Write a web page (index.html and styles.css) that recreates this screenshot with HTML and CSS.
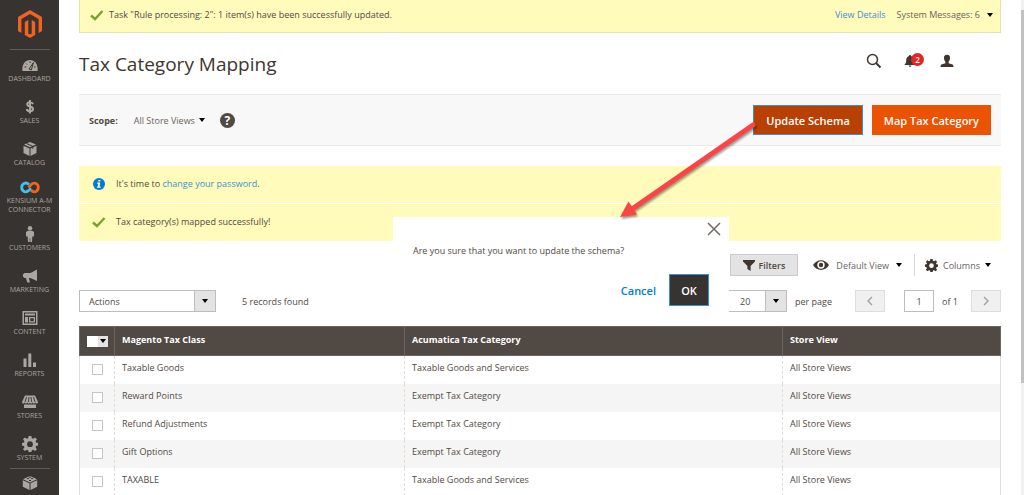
FILE: index.html
```html
<!DOCTYPE html>
<html lang="en">
<head>
<meta charset="utf-8">
<title>Tax Category Mapping</title>
<link rel="stylesheet" href="styles.css">
</head>
<body>
<svg class="sprite" aria-hidden="true">
  <symbol id="caret" viewBox="0 0 6 4"><path d="M0 0h6L3 4z"/></symbol>
  <symbol id="check" viewBox="0 0 14 12"><path d="M1 6.500l4 3.500 7.500-8" fill="none" stroke="#79a22e" stroke-width="2.400"/></symbol>
  <symbol id="gear" viewBox="0 0 16 16"><path fill-rule="evenodd" d="M6.600 0h2.800l.4 2.200 1.300.5L13 1.400 15 3.300l-1.400 1.900.5 1.300 2 .4v2.700l-2 .4-.5 1.300 1.300 1.900-1.900 1.900-1.900-1.300-1.300.5-.4 2.200H6.600l-.4-2.200-1.300-.5L3 15.100l-2-1.900 1.400-1.900-.5-1.300L0 9.600V6.900l1.900-.4.5-1.300L1 3.300 3 1.400l1.900 1.300 1.300-.5zM8 5.300a2.900 2.900 0 1 0 0 5.800 2.900 2.900 0 0 0 0-5.800z"/></symbol>
</svg>
<div class="page">
  <nav class="sidebar" aria-label="Main menu">
    <a class="logo" href="#" aria-label="Magento Admin">
      <svg width="24" height="28" viewBox="0 0 24 28" fill="#f26322"><path d="M12 0l12 7v14l-3.400 2V9L12 4 3.400 9v14L0 21V7zM10.300 10v13.500l1.700 1 1.700-1V10l3.500 2v13L12 28l-5.200-3V12z"/></svg>
    </a>
    <a class="item" href="#"><svg class="icon" width="16" height="16" viewBox="0 0 16 16"><path d="M.5 14C-.5 8 3 3 8 3s8.500 5 7.500 11z"/><path d="M7 12l4.500-6.500L9.300 13zM2.500 10h1.700M4 6.500l1 1M8 4.500V6M12 10h1.500" fill="none" stroke="#373330" stroke-width="1"/></svg><span>DASHBOARD</span></a>
    <a class="item" href="#"><svg class="icon" width="16" height="16" viewBox="0 0 16 16"><path d="M11 5.200C10.500 3.800 9.500 3.300 8 3.300c-1.700 0-2.800.8-2.800 2C5.200 8.500 11 6.500 11 10c0 1.500-1.300 2.300-3 2.300S5 11.500 4.700 10M8 1v13.500" fill="none" stroke="#aaa6a0" stroke-width="2"/></svg><span>SALES</span></a>
    <a class="item" href="#"><svg class="icon" width="16" height="16" viewBox="0 0 16 16"><path d="M8 1l6 2.600-6 2.700-6-2.700zM1.500 4.700l6 2.700V15l-6-3zM14.500 4.700l-6 2.700V15l6-3z"/><path d="M4.500 2.500l6.300 2.800v2.500" fill="none" stroke="#373330"/></svg><span>CATALOG</span></a>
    <a class="item item-tall" href="#"><svg class="icon" width="20" height="16" viewBox="0 0 20 16" fill="none" stroke-width="2.800"><path d="M9 4.500C5.500 1.300 1.700 4 1.700 7.500s4 6 7.300 2.800l2-2" stroke="#3fc3ee"/><path d="M8.500 7.500L11 4.700c3.500-3.200 7.300-.7 7.300 2.800s-4 6-7.300 2.800" stroke="#f26322"/></svg><span>KENSIUM A-M CONNECTOR</span></a>
    <a class="item" href="#"><svg class="icon" width="16" height="16" viewBox="0 0 16 16"><circle cx="8" cy="2.200" r="2.200"/><path d="M5.800 4.800h4.400L12 6v4.500h-1.500V8L10 16H8.300v-4h-.6v4H6L5.500 8v2.500H4V6z"/></svg><span>CUSTOMERS</span></a>
    <a class="item" href="#"><svg class="icon" width="16" height="16" viewBox="0 0 16 16"><path d="M15 1.500v11.500L8.500 10H7l.8 4.500H5.300L4 10H2.500L1 8.800V6.200L2.500 5h6z"/></svg><span>MARKETING</span></a>
    <a class="item" href="#"><svg class="icon" width="16" height="16" viewBox="0 0 16 16"><path fill-rule="evenodd" d="M.5 1h15v14H.5zM2 2.500v11h12v-11zM3 3.500h10v2H3zM3 7h3v5.500H3zM7 7h6v5.500H7zM8.300 8.200v3h3.400v-3z"/></svg><span>CONTENT</span></a>
    <a class="item" href="#"><svg class="icon" width="16" height="16" viewBox="0 0 16 16"><path d="M1.500 6.500h3V15h-3zM6.300 1.500h3V15h-3zM11 10.500h3V15h-3z"/></svg><span>REPORTS</span></a>
    <a class="item" href="#"><svg class="icon" width="16" height="16" viewBox="0 0 16 16"><path d="M3 1.500h10L16 8c0 2-2.500 2-2.700.3C13 10 10.800 10 10.600 8.300 10.500 10 8 10 8 8.300 8 10 5.500 10 5.400 8.300 5.200 10 3 10 2.700 8.300 2.500 10 0 10 0 8zM2 10.500h12V14H2z"/><path d="M4.500 3L3 8M7 3l-.6 5M9 3l.6 5M11.500 3L13 8" fill="none" stroke="#373330" stroke-width=".9"/></svg><span>STORES</span></a>
    <a class="item item-last" href="#"><svg class="icon" width="16" height="16"><use href="#gear"/></svg><span>SYSTEM</span></a>
    <a class="partners" href="#" aria-label="Find Partners and Extensions"><svg width="16" height="16" viewBox="0 0 16 16"><path d="M8 1l7 3.200-7 3.300-7-3.300zM.8 5.300l6.700 3V15l-6.700-3.300zM15.200 5.300l-6.700 3V15l6.700-3.300z" fill="#aaa6a0"/><path d="M5 3.600h2M9 3.600h2M7 5.500h2M7 2.200h2" stroke="#373330" fill="none"/></svg></a>
  </nav>

  <main class="main">
    <section class="system-message">
      <svg width="14" height="12"><use href="#check"/></svg>
      <p>Task "Rule processing: 2": 1 item(s) have been successfully updated.</p>
      <a class="details" href="#">View Details</a>
      <button class="plain" type="button">System Messages: 6 <svg class="caret" width="6" height="4"><use href="#caret"/></svg></button>
    </section>

    <header class="header">
      <h1>Tax Category Mapping</h1>
      <div class="tools">
        <button type="button" aria-label="Search"><svg width="16" height="16" viewBox="0 0 16 16"><circle cx="6.500" cy="6.500" r="5" fill="none" stroke="#41362f" stroke-width="1.500"/><path d="M10 10l4.500 4.500" stroke="#41362f" stroke-width="2"/></svg></button>
        <button class="bell" type="button" aria-label="Notifications"><svg width="12" height="14" viewBox="0 0 12 14"><path d="M6 1c.8 0 1 .5 1 1 2 .6 2.800 2.300 2.800 4.500 0 2.500.7 3.500 2 4.500H.2c1.300-1 2-2 2-4.500C2.200 4.300 3 2.600 5 2c0-.5.2-1 1-1zM4.700 11.500h2.600c0 1.800-2.600 1.800-2.600 0z"/></svg><span class="badge">2</span></button>
        <button type="button" aria-label="Account"><svg width="14" height="14" viewBox="0 0 14 14"><path d="M7 .8c2.300 0 3.200 1.500 3 3.400C9.800 6 9.200 7 8.600 7.700v1.500l4 1.300c.6.300.8.800.8 2.500H.6c0-1.700.2-2.200.8-2.500l4-1.300V7.700C4.800 7 4.200 6 4 4.200 3.800 2.300 4.700.8 7 .8z"/></svg></button>
      </div>
    </header>

    <section class="actions-bar">
      <span class="scope-label">Scope:</span>
      <button class="plain scope" type="button">All Store Views <svg class="caret" width="6" height="4"><use href="#caret"/></svg></button>
      <button class="help" type="button" aria-label="Help">?</button>
      <div class="primary-actions">
        <button class="primary focused" type="button">Update Schema</button>
        <button class="primary" type="button">Map Tax Category</button>
      </div>
    </section>

    <section class="messages">
      <p class="message"><svg width="12" height="12" viewBox="0 0 12 12"><circle cx="6" cy="6" r="6" fill="#007bdb"/><path d="M5.300 1.900h2v1.600h-2zM4.300 4.600h2.900L6.600 8.400h1v1.300H4.100V8.400h.7l.3-2.500h-.8z" fill="#fffbbb"/></svg><span>It's time to <a href="#">change your password</a>.</span></p>
      <p class="message"><svg width="14" height="12"><use href="#check"/></svg><span>Tax category(s) mapped successfully!</span></p>
    </section>

    <section class="grid-tools">
      <button class="filters" type="button"><svg width="12" height="11" viewBox="0 0 12 11"><path d="M0 0h12v1.500L7.600 6v5L4.400 9V6L0 1.500z"/></svg>Filters</button>
      <button class="plain view" type="button"><svg width="16" height="10" viewBox="0 0 16 10"><path fill-rule="evenodd" d="M0 5c4-6.500 12-6.500 16 0-4 6.500-12 6.500-16 0zm8-3.700a3.700 3.700 0 1 0 0 7.400 3.700 3.700 0 0 0 0-7.400z"/><circle cx="8" cy="5" r="2.200"/></svg>Default View<svg class="caret" width="6" height="4"><use href="#caret"/></svg></button>
      <button class="plain columns" type="button"><svg width="13" height="13"><use href="#gear"/></svg>Columns<svg class="caret" width="6" height="4"><use href="#caret"/></svg></button>
    </section>

    <section class="pager-row">
      <div class="select mass"><select aria-label="Actions"><option>Actions</option></select><span class="select-arrow"><svg width="6" height="4"><use href="#caret"/></svg></span></div>
      <span class="records">5 records found</span>
      <div class="select size"><select id="size"><option>20</option></select><span class="select-arrow"><svg width="6" height="4"><use href="#caret"/></svg></span></div>
      <label class="per-page" for="size">per page</label>
      <button class="page-button" type="button" disabled aria-label="Previous page"><svg width="6" height="10" viewBox="0 0 6 10"><path d="M5 1L1 5l4 4"/></svg></button>
      <input class="page-input" id="page" type="text" value="1">
      <label class="of" for="page">of 1</label>
      <button class="page-button" type="button" disabled aria-label="Next page"><svg width="6" height="10" viewBox="0 0 6 10"><path d="M1 1l4 4-4 4"/></svg></button>
    </section>

    <table class="grid">
      <colgroup><col class="c-check"><col class="c-class"><col class="c-category"><col></colgroup>
      <thead><tr><th><span class="multi"><input type="checkbox" aria-label="Select all"><button type="button" aria-label="Selection options"><svg width="6" height="4"><use href="#caret"/></svg></button></span></th><th>Magento Tax Class</th><th>Acumatica Tax Category</th><th>Store View</th></tr></thead>
      <tbody>
        <tr><td><input type="checkbox" aria-label="Taxable Goods"></td><td>Taxable Goods</td><td>Taxable Goods and Services</td><td>All Store Views</td></tr>
        <tr><td><input type="checkbox" aria-label="Reward Points"></td><td>Reward Points</td><td>Exempt Tax Category</td><td>All Store Views</td></tr>
        <tr><td><input type="checkbox" aria-label="Refund Adjustments"></td><td>Refund Adjustments</td><td>Exempt Tax Category</td><td>All Store Views</td></tr>
        <tr><td><input type="checkbox" aria-label="Gift Options"></td><td>Gift Options</td><td>Exempt Tax Category</td><td>All Store Views</td></tr>
        <tr><td><input type="checkbox" aria-label="TAXABLE"></td><td>TAXABLE</td><td>Taxable Goods and Services</td><td>All Store Views</td></tr>
      </tbody>
    </table>
  </main>
</div>

<div class="modal" role="dialog" aria-label="Update schema">
  <button class="close" type="button" aria-label="Close"><svg width="14" height="14" viewBox="0 0 14 14"><path d="M1 1l12 12M13 1L1 13" stroke="#736963" stroke-width="1.500"/></svg></button>
  <p>Are you sure that you want to update the schema?</p>
  <div class="modal-actions">
    <button class="cancel" type="button">Cancel</button>
    <button class="ok" type="button">OK</button>
  </div>
</div>
<svg class="arrow" width="144" height="102" viewBox="0 0 144 102" aria-hidden="true"><path d="M137 5L16 89" stroke="#fc4444" stroke-width="5" stroke-linecap="round"/><path d="M4 97l8.500-15.500L21 94.500z" fill="#fc4444"/></svg>
<div class="scroll-track" aria-hidden="true"><div class="scroll-thumb"></div></div>
</body>
</html>
```
FILE: styles.css
```css
* { box-sizing: border-box; }
body {
  margin: 0;
  overflow: hidden;
  background: #fff;
  color: #514943;
  font: 9px/13px "Open Sans", "Noto Sans", sans-serif;
}
p, h1 { margin: 0; }
a { color: #3b8fd6; text-decoration: none; }
svg { flex: none; }
button, input, select { margin: 0; font: inherit; color: inherit; }
button { padding: 0; border: 0; background: none; cursor: pointer; }
button svg { fill: #41362f; }
.caret, .select-arrow svg, .multi svg { fill: #000; }
.sprite { position: absolute; width: 0; height: 0; }
.page { display: flex; height: 100vh; }

.sidebar {
  display: flex;
  flex: none;
  flex-direction: column;
  align-items: center;
  width: 59px;
  overflow: hidden;
  background: #373330;
}
.logo {
  display: flex;
  flex: none;
  justify-content: center;
  width: 40px;
  height: 50px;
  margin-bottom: 3px;
  padding-top: 10px;
  border-bottom: 1px solid #5f5b58;
}
.item {
  display: flex;
  flex: none;
  flex-direction: column;
  align-items: center;
  gap: 1px;
  width: 100%;
  padding: 4px 0 12px;
  color: #aaa6a0;
  font-size: 7px;
  line-height: 9px;
  text-align: center;
}
.item-tall { gap: 0; padding: 1px 4px 8px; }
.item-last { padding-bottom: 6px; }
.icon { fill: #aaa6a0; }
.item-tall .icon { fill: none; }
.partners {
  display: flex;
  flex: none;
  justify-content: center;
  width: 40px;
  padding-top: 6px;
  border-top: 1px solid #5f5b58;
}

.main { flex: 1; min-width: 0; padding: 0 23px 0 20px; }
.plain { display: inline-flex; align-items: center; color: #6b625c; }
.system-message {
  display: flex;
  align-items: center;
  height: 33px;
  padding: 0 7px 3px 10px;
  border: 1px solid #e3e0b5;
  border-top: 0;
  background: #fffbbb;
}
.system-message p { margin-left: 5px; }
.details { margin-left: auto; }
.system-message .plain { gap: 7px; margin-left: 11px; }

.header { display: flex; align-items: center; justify-content: space-between; height: 61px; }
h1 { padding-top: 1px; color: #41362f; font-size: 19px; font-weight: 400; line-height: 26px; }
.tools { display: flex; align-items: center; gap: 22px; margin: 0 47px 5px 0; }
.tools button { display: flex; position: relative; }
.bell { width: 14px; }
.badge {
  position: absolute;
  left: 7px;
  top: -1px;
  width: 13px;
  border-radius: 7px;
  background: #e22626;
  color: #fff;
  font-size: 8px;
  font-weight: 600;
  line-height: 13px;
}

.actions-bar {
  display: flex;
  align-items: center;
  height: 52px;
  padding: 0 10px;
  border: solid #e9e9e9;
  border-width: 1px 0;
  background: #f8f8f8;
}
.scope-label { font-weight: 700; }
.scope { gap: 4px; margin-left: 16px; }
.help {
  width: 15px;
  margin-left: 15px;
  border-radius: 8px;
  background: #514943;
  color: #fff;
  font-size: 12px;
  font-weight: 700;
  line-height: 15px;
}
.primary-actions { display: flex; gap: 9px; margin-left: auto; }
.primary {
  height: 30px;
  padding: 0 12px;
  background: #eb5202;
  color: #fff;
  font-size: 11px;
  font-weight: 600;
}
.focused { border: 1px solid #3b8fd6; background: #b84002; }

.messages { display: grid; gap: 1px; margin-top: 20px; }
.message {
  display: flex;
  align-items: center;
  gap: 10px;
  height: 37px;
  padding: 0 13px 2px;
  background: #fffbbb;
}
.message svg { width: 14px; }

.grid-tools { display: flex; justify-content: flex-end; align-items: center; height: 22px; margin-top: 13px; }
.filters {
  display: flex;
  align-items: center;
  justify-content: center;
  gap: 3px;
  width: 68px;
  height: 22px;
  border: 1px solid #c9c9c9;
  background: #e3e3e3;
  color: #514943;
  font-weight: 600;
}
.view { gap: 7px; margin-left: 15px; }
.columns { gap: 5px; height: 22px; margin-left: 12px; padding: 0 10px; border-left: 1px solid #d6d6d6; }

.pager-row { display: flex; align-items: center; height: 22px; margin: 14px 0; }
.select { display: flex; position: relative; height: 22px; border: 1px solid #bdbdbd; }
.mass { width: 137px; }
.size { width: 68px; margin-left: auto; }
.select select {
  width: 100%;
  padding: 0 28px 0 9px;
  border: 0;
  border-radius: 0;
  background: #fff;
  appearance: none;
}
.size select { padding-left: 20px; }
.select-arrow {
  display: grid;
  position: absolute;
  right: 0;
  place-items: center;
  width: 21px;
  height: 100%;
  border-left: 1px solid #bdbdbd;
  background: #e3e3e3;
  pointer-events: none;
}
.records { margin-left: 26px; }
.per-page { margin-left: 8px; }
.page-button { display: grid; place-items: center; width: 30px; height: 22px; border: 1px solid #dedede; background: #f0f0f0; }
.page-button svg { fill: none; stroke: #a09c98; stroke-width: 1.300; }
.per-page + .page-button { margin-left: 23px; }
.page-input { width: 30px; height: 22px; margin-left: 19px; padding: 0; border: 1px solid #bdbdbd; text-align: center; }
.of { margin: 0 13px 0 8px; }

.grid { width: 100%; border-collapse: collapse; table-layout: fixed; }
.c-check { width: 35px; }
.c-class { width: 290px; }
.c-category { width: 378px; }
.grid th {
  height: 29px;
  padding: 0 7px 3px;
  border: 1px solid #6b635d;
  background: #514943;
  color: #fff;
  font-weight: 700;
  text-align: left;
}
.grid td { height: 28px; padding: 0 7px 4px; border: 0 dashed #dedede; border-width: 0 1px; }
.grid td:first-child { padding-bottom: 1px; border-left-style: solid; text-align: center; }
.grid td:last-child { border-right-style: solid; }
.grid th:first-child { padding-bottom: 0; }
.grid tbody tr:nth-child(even) { background: #f5f5f5; }
.grid input { display: block; width: 11px; height: 11px; margin: 0 auto; border: 1px solid #c4c4c4; background: #fff; appearance: none; }
.multi { display: flex; width: 21px; height: 11px; background: #fff; }
.grid .multi input { flex: none; margin: 0; border: 0; }
.multi button { display: grid; flex: 1; place-items: center; background: #e3e3e3; }

.modal { position: absolute; left: 393px; top: 217px; width: 336px; padding: 27px 20px 12px; background: #fff; }
.close { display: flex; position: absolute; right: 8px; top: 5px; }
.modal-actions { display: flex; justify-content: flex-end; gap: 13px; margin-top: 17px; font-size: 11px; font-weight: 600; }
.cancel { color: #007bdb; }
.ok { width: 40px; height: 32px; border: 1px solid #3b8fd6; background: #373330; color: #fff; }
.arrow { position: absolute; left: 616px; top: 120px; filter: drop-shadow(1px 2px 1px #0006); }
.scroll-track { position: fixed; right: 0; top: 0; bottom: 0; width: 3px; padding-top: 10px; background: #f1f1f1; }
.scroll-thumb { height: 77%; background: #c1c1c1; }
```
